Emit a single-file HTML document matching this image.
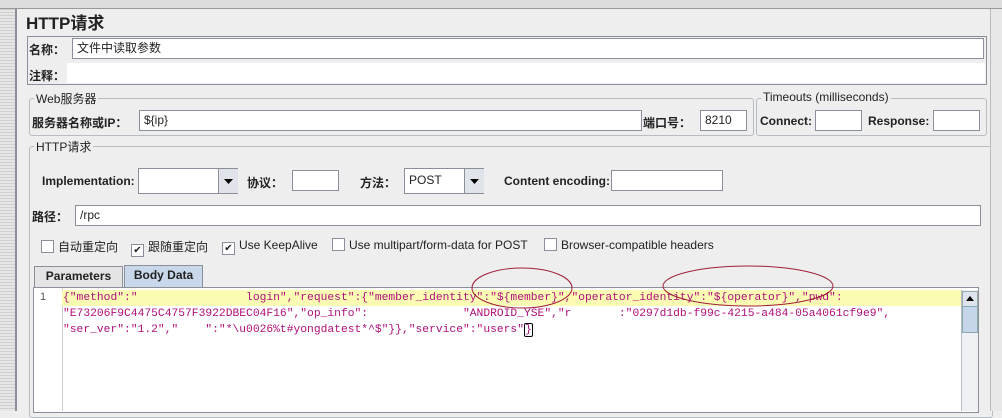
<!DOCTYPE html>
<html><head><meta charset="utf-8"><style>
body{margin:0;width:1002px;height:411px;overflow:hidden;background:#eeeeee;font-family:"Liberation Sans","Noto Sans CJK SC",sans-serif;font-size:12px;color:#222;position:relative}
.a{position:absolute}
.in{position:absolute;background:#fff;border:1px solid #8a8f99;box-sizing:border-box;font-size:12px;padding:1px 4px;line-height:16px}
.grp{position:absolute;border:1px solid #b8bcc4;border-radius:3px}
.lg{position:absolute;background:#eee;padding:0 2px;font-size:12px;top:-9px;left:4px}
.b{font-weight:bold}
.cb{display:inline-block;width:11px;height:11px;border:1px solid #8a8f99;background:#fff;vertical-align:-2px;margin-right:4px;font-size:10px;line-height:11px;text-align:center}
.mono{font-family:"Liberation Mono",monospace;font-size:11.3px;color:#b0107a;white-space:pre;position:absolute;left:63px;line-height:16px}
</style></head><body>
<div class="a" style="left:0;top:0;width:1002px;height:8px;background:#dcdcdc;border-bottom:1px solid #999"></div>
<div class="a" style="left:0;top:9px;width:15px;height:402px;background:repeating-linear-gradient(0deg,#e6e6e6 0 2px,#cfcfcf 2px 3px)"></div>
<div class="a" style="left:15px;top:9px;width:2px;height:402px;background:#8a8f99"></div>
<div class="a b" style="left:26px;top:9px;font-size:17px">HTTP请求</div>
<div class="grp" style="left:27px;top:36px;width:958px;height:47px;border-color:#8a8f99;border-radius:0"></div>
<div class="a b" style="left:29px;top:41px">名称：</div>
<div class="in" style="left:72px;top:38px;width:912px;height:21px">文件中读取参数</div>
<div class="a b" style="left:29px;top:67px">注释：</div>
<div class="in" style="left:67px;top:63px;width:918px;height:20px;border:none"></div>
<div class="grp" style="left:29px;top:98px;width:723px;height:36px"><span class="lg">Web服务器</span></div>
<div class="a b" style="left:32px;top:114px">服务器名称或IP：</div>
<div class="in" style="left:139px;top:110px;width:503px;height:21px">${ip}</div>
<div class="a b" style="left:643px;top:114px">端口号：</div>
<div class="in" style="left:700px;top:110px;width:47px;height:21px">8210</div>
<div class="grp" style="left:756px;top:98px;width:229px;height:36px"><span class="lg">Timeouts (milliseconds)</span></div>
<div class="a b" style="left:760px;top:114px">Connect:</div>
<div class="in" style="left:815px;top:110px;width:47px;height:21px"></div>
<div class="a b" style="left:868px;top:114px">Response:</div>
<div class="in" style="left:933px;top:110px;width:47px;height:21px"></div>
<div class="grp" style="left:29px;top:146px;width:962px;height:270px"><span class="lg">HTTP请求</span></div>
<div class="a b" style="left:42px;top:174px">Implementation:</div>
<div class="in" style="left:138px;top:168px;width:100px;height:26px"></div>
<div class="a" style="left:218px;top:169px;width:19px;height:24px;background:#e0e4ea;border-left:1px solid #8a8f99"><svg width="19" height="24"><path d="M5 10h9l-4.5 5z" fill="#000"/></svg></div>
<div class="a b" style="left:247px;top:174px">协议：</div>
<div class="in" style="left:292px;top:170px;width:47px;height:21px"></div>
<div class="a b" style="left:360px;top:174px">方法：</div>
<div class="in" style="left:404px;top:168px;width:80px;height:26px;line-height:20px">POST</div>
<div class="a" style="left:464px;top:169px;width:19px;height:24px;background:#e0e4ea;border-left:1px solid #8a8f99"><svg width="19" height="24"><path d="M5 10h9l-4.5 5z" fill="#000"/></svg></div>
<div class="a b" style="left:504px;top:174px">Content encoding:</div>
<div class="in" style="left:611px;top:170px;width:112px;height:21px"></div>
<div class="a b" style="left:32px;top:208px">路径：</div>
<div class="in" style="left:75px;top:205px;width:906px;height:21px">/rpc</div>
<div class="a" style="left:41px;top:238px"><span class="cb"></span>自动重定向</div>
<div class="a" style="left:131px;top:238px"><span class="cb">✔</span>跟随重定向</div>
<div class="a" style="left:222px;top:238px"><span class="cb">✔</span>Use KeepAlive</div>
<div class="a" style="left:332px;top:238px"><span class="cb"></span>Use multipart/form-data for POST</div>
<div class="a" style="left:544px;top:238px"><span class="cb"></span>Browser-compatible headers</div>
<div class="a b" style="left:34px;top:266px;width:87px;height:20px;border:1px solid #8a8f99;border-bottom:none;background:#e4e4e4;text-align:center;line-height:18px">Parameters</div>
<div class="a b" style="left:124px;top:265px;width:77px;height:22px;border:1px solid #8a8f99;border-bottom:none;background:#c8d8ea;text-align:center;line-height:18px">Body Data</div>
<div class="a" style="left:33px;top:287px;width:944px;height:124px;background:#fff;border:1px solid #8a8f99"></div>
<div class="a" style="left:34px;top:288px;width:28px;height:123px;border-right:1px solid #ccc;background:#fff"></div>
<div class="a" style="left:40px;top:291px;font-size:11px;color:#555">1</div>
<div class="a" style="left:62px;top:290px;width:899px;height:16px;background:#fbfbb4"></div>
<div class="mono" style="top:290px">{"method":"                login","request":{"member_identity":"${member}","operator_identity":"${operator}","pwd":</div>
<div class="mono" style="top:306px">"E73206F9C4475C4757F3922DBEC04F16","op_info":              "ANDROID_YSE","r       :"0297d1db-f99c-4215-a484-05a4061cf9e9",</div>
<div class="mono" style="top:322px">"ser_ver":"1.2","    ":"*\u0026%t#yongdatest*^$"}},"service":"users"<span style="border:1px solid #000;border-radius:2px">}</span></div>
<div class="a" style="left:961px;top:290px;width:16px;height:121px;background:#eef0f3;border-left:1px solid #b8bcc4"></div>
<div class="a" style="left:962px;top:291px;width:14px;height:14px;background:#dde4ee;border:1px solid #9aa"><svg width="14" height="14"><path d="M3 9h8l-4-5z" fill="#000"/></svg></div>
<div class="a" style="left:962px;top:306px;width:14px;height:25px;background:#c6d6ea;border:1px solid #8aa"></div>
<div class="a" style="left:990px;top:9px;width:12px;height:402px;background:#e8e8e8;border-left:1px solid #bbb"></div>
<svg class="a" style="left:0;top:0" width="1002" height="411"><ellipse cx="522" cy="288" rx="50" ry="20" fill="none" stroke="#a0203a" stroke-width="1"/><ellipse cx="748" cy="286" rx="85" ry="20" fill="none" stroke="#a0203a" stroke-width="1"/></svg>
</body></html>
